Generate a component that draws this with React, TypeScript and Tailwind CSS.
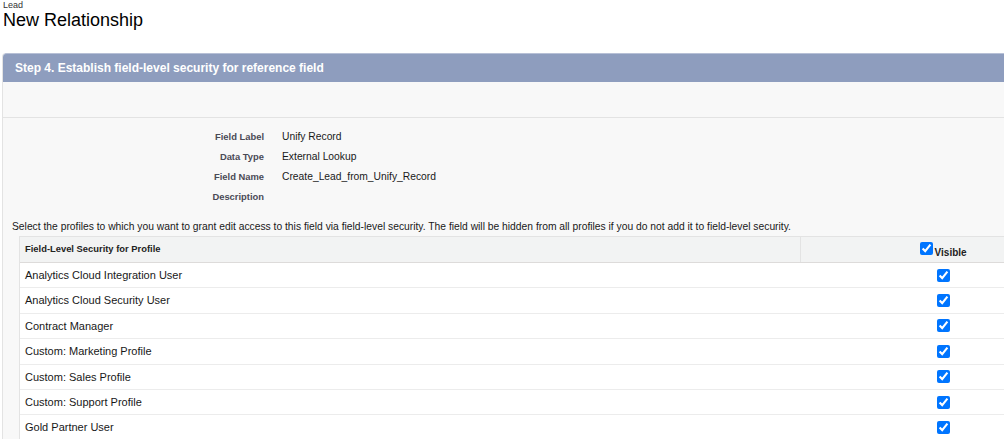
import React from "react";

const fields: [string, string][] = [
  ["Field Label", "Unify Record"],
  ["Data Type", "External Lookup"],
  ["Field Name", "Create_Lead_from_Unify_Record"],
  ["Description", ""],
];

const profiles = [
  "Analytics Cloud Integration User",
  "Analytics Cloud Security User",
  "Contract Manager",
  "Custom: Marketing Profile",
  "Custom: Sales Profile",
  "Custom: Support Profile",
  "Gold Partner User",
];

function Check() {
  return (
    <input
      type="checkbox"
      defaultChecked
      className="w-[13px] h-[13px] m-0 align-middle accent-[#0075ff]"
    />
  );
}

export default function App() {
  return (
    <div
      className="w-[1004px] h-[439px] overflow-hidden bg-white text-[#181818]"
      style={{ fontFamily: '"Liberation Sans", Arial, sans-serif' }}
    >
      <div className="pl-[3px]">
        <div className="text-[9px] leading-[10px] text-[#333]">Lead</div>
        <div className="text-[18px] leading-[20px] text-black">New Relationship</div>
      </div>
      <div className="ml-[2px] mt-[23px] w-[1100px] rounded-tl-[4px] border-l border-[#e3e3e3] bg-[#f8f8f8]">
        <div className="h-[29px] rounded-tl-[4px] bg-[#8e9dbe] border-t border-[#b7c0d6] flex items-center pl-[12px]">
          <span className="text-white font-bold text-[12px]">
            Step 4. Establish field-level security for reference field
          </span>
        </div>
        <div className="h-[36px] border-b border-[#e3e3e3]"></div>
        <div className="pt-[9px]">
          {fields.map(([k, v]) => (
            <div key={k} className="flex h-[20px] items-center">
              <div className="w-[261px] text-right text-[9.4px] font-bold text-[#4a4a56]">{k}</div>
              <div className="pl-[18px] text-[10.3px] text-[#181818]">{v}</div>
            </div>
          ))}
          <div className="pl-[9px] pt-[12px] text-[10.3px] text-[#181818] h-[29px]">
            Select the profiles to which you want to grant edit access to this field via field-level security. The field will be hidden from all profiles if you do not add it to field-level security.
          </div>
          <div className="ml-[16px] w-[1066px] border-t border-l border-[#e3e3e3] bg-white">
            <div className="flex h-[26px] bg-[#f2f3f3] border-b border-[#dddbda]">
              <div className="w-[782px] border-r border-[#e3e3e3] flex items-center pl-[5px] text-[9.4px] font-bold text-[#222]">
                Field-Level Security for Profile
              </div>
              <div className="w-[284px] flex items-center justify-center gap-[2px] pt-[2px]">
                <span className="relative top-[-3px]"><Check /></span>
                <span className="text-[10px] font-bold text-[#222] relative top-[2px]">Visible</span>
              </div>
            </div>
            {profiles.map((p) => (
              <div key={p} className="flex h-[25.4px] border-b border-[#ececec]">
                <div className="w-[782px] flex items-center pl-[5px] text-[11px] text-[#181818]">{p}</div>
                <div className="w-[284px] flex items-center justify-center">
                  <Check />
                </div>
              </div>
            ))}
          </div>
        </div>
      </div>
    </div>
  );
}
